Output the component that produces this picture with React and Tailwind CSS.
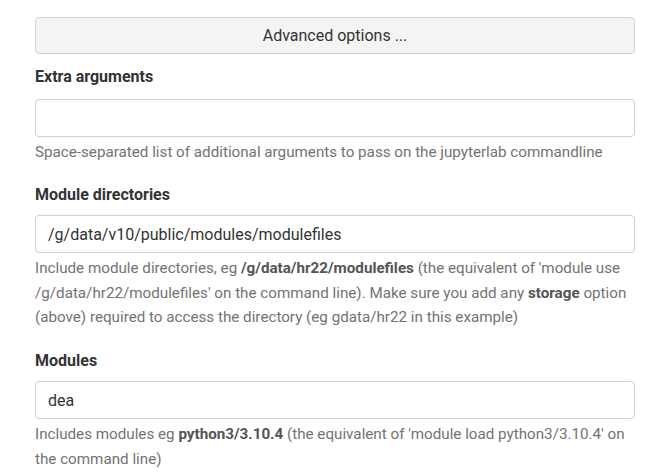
import React from 'react'

const font = { fontFamily: 'Roboto, "Liberation Sans", sans-serif' }

function Field({ label, value, gap, children }) {
  return (
    <div className={gap}>
      <label className="block text-base font-bold leading-6 text-[#333]">{label}</label>
      <input
        type="text"
        defaultValue={value}
        className="block w-full h-[38px] px-3 text-base text-[#333] bg-white border border-[#d0d0d0] rounded outline-none"
      />
      <p className="mt-[3px] text-[15.2px] leading-[24.5px] text-[#737373]">{children}</p>
    </div>
  )
}

export default function App() {
  return (
    <div className="min-h-screen bg-white pt-[17px] pl-[35px] pr-[33px]" style={font}>
      <button className="block w-full h-[37px] text-base text-[#333] bg-[#f4f4f4] border border-[#d2d2d2] rounded">
        Advanced options ...
      </button>

      <div className="mt-[11px] [&_label]:mb-[10px]">
        <Field label="Extra arguments" value="">
          Space-separated list of additional arguments to pass on the jupyterlab commandline
        </Field>
      </div>

      <div className="mt-[18.5px] [&_label]:mb-[8px]">
        <Field label="Module directories" value="/g/data/v10/public/modules/modulefiles">
          Include module directories, eg <b className="text-[#555]">/g/data/hr22/modulefiles</b> (the equivalent of 'module use /g/data/hr22/modulefiles' on the command line). Make sure you add any <b className="text-[#555]">storage</b> option (above) required to access the directory (eg gdata/hr22 in this example)
        </Field>
      </div>

      <div className="mt-[19.5px] [&_label]:mb-[8px]">
        <Field label="Modules" value="dea">
          Includes modules eg <b className="text-[#555]">python3/3.10.4</b> (the equivalent of 'module load python3/3.10.4' on the command line)
        </Field>
      </div>
    </div>
  )
}
